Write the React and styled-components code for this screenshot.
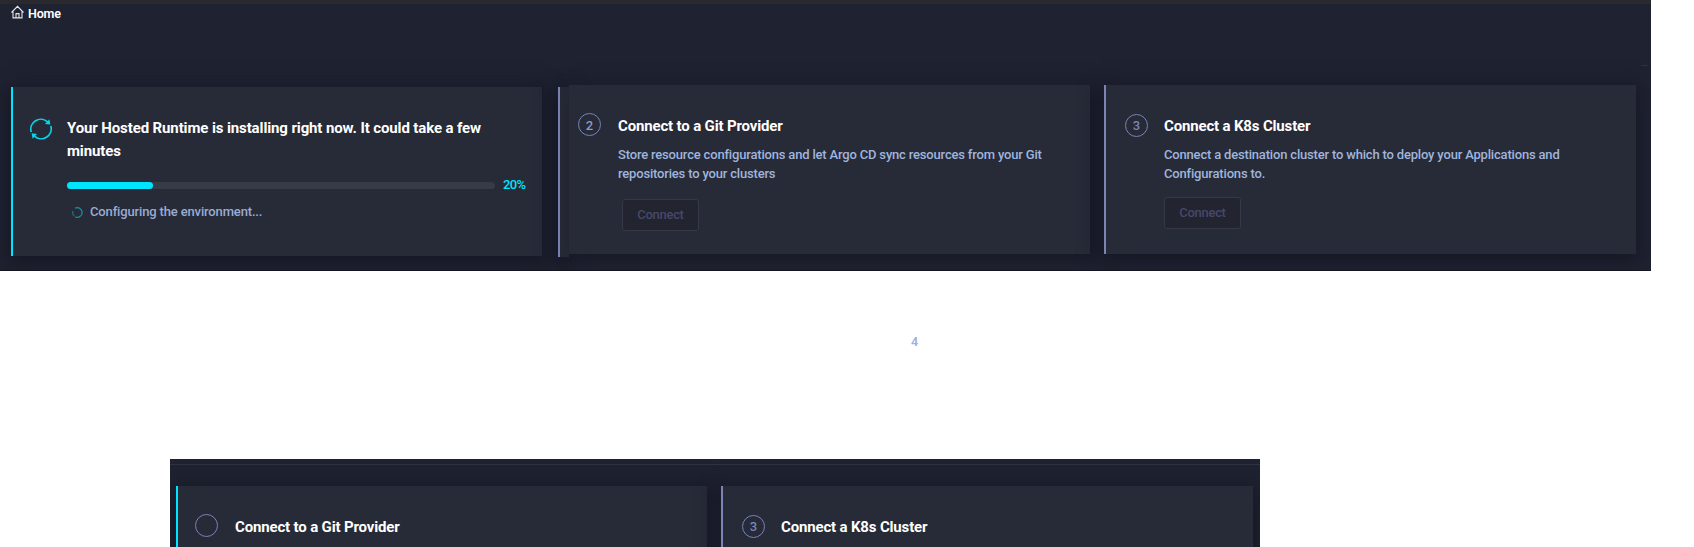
import React from "react";
import styled, { createGlobalStyle } from "styled-components";

const colors = {
  panel: "#1f2230",
  card: "#272a37",
  cyan: "#00e5ff",
  violet: "#7d83b5",
  copy: "#9fb5de",
};

const GlobalStyle = createGlobalStyle`
  *, *::before, *::after { box-sizing: border-box; }
  body {
    margin: 0;
    background: #fff;
    font-family: Roboto, "Liberation Sans", sans-serif;
    overflow: hidden;
  }
  h2, p { margin: 0; }
`;

const Page = styled.main`
  display: flex;
  flex-direction: column;
  align-items: flex-start;
  height: 547px;
  overflow: hidden;
`;

const HomePanel = styled.section`
  width: 1651px;
  height: 271px;
  flex: none;
  overflow: hidden;
  display: flex;
  flex-direction: column;
  background: ${colors.panel};
  border-top: 4px solid #2a2a2e;
  border-bottom: 1px solid #14151f;
`;

const Breadcrumb = styled.header`
  display: flex;
  align-items: center;
  gap: 4px;
  height: 19px;
  padding-left: 11px;
  color: #fff;
  font-size: 12.5px;
  font-weight: 600;
  letter-spacing: -0.2px;
`;

const HomeSvg = styled.svg`
  width: 13px;
  height: 14px;
  margin-top: -3px;
`;

const Divider = styled.div`
  width: 7px;
  height: 1px;
  margin: 42px 3px 0 auto;
  background: #30323f;
`;

const Steps = styled.div`
  display: flex;
  align-items: flex-start;
  padding: 19px 15px 0 11px;
`;

const shadow = "0 4px 18px 3px rgba(20, 21, 35, 0.8)";

const Card = styled.article`
  display: flex;
  align-items: flex-start;
  flex: none;
  gap: ${(p) => p.$gap || 16}px;
  width: ${(p) => p.$width}px;
  height: 169px;
  margin: ${(p) => p.$drop || 0}px 0 0 ${(p) => p.$before || 0}px;
  padding: 29px 16px 0 ${(p) => p.$inset}px;
  background: ${colors.card};
  border-left: ${(p) => (p.$accent ? `2px solid ${p.$accent}` : "0")};
  box-shadow: ${shadow};
`;

const CardEdge = styled.div`
  flex: none;
  width: 11px;
  height: 170px;
  margin: 2px 0 0 16px;
  background: ${colors.card};
  border-left: 2px solid ${colors.violet};
  box-shadow: ${shadow};
`;

const OpenCard = styled(Card)`
  box-shadow: 6px 4px 18px 0 rgba(20, 21, 35, 0.8);
`;

const CardBody = styled.div`
  flex: 1;
  min-width: 0;
  padding-top: 1px;
`;

const Title = styled.h2`
  color: #fff;
  font-size: 15px;
  font-weight: 700;
  line-height: 23px;
  letter-spacing: ${(p) => (p.$long ? -0.12 : -0.16)}px;
  white-space: nowrap;
`;

const Description = styled.p`
  margin-top: 7px;
  color: ${colors.copy};
  font-size: 13px;
  font-weight: 500;
  line-height: 19px;
  letter-spacing: -0.18px;
  white-space: nowrap;
`;

const StepNumber = styled.span`
  flex: none;
  display: flex;
  align-items: center;
  justify-content: center;
  width: 23px;
  height: 23px;
  margin-top: ${(p) => (p.$raised ? -1 : 0)}px;
  padding-top: ${(p) => (p.$raised ? 2 : 0)}px;
  border: 1px solid ${colors.violet};
  border-radius: 50%;
  color: ${(p) => (p.$raised ? "#8b9cc7" : colors.violet)};
  font-size: 13px;
  font-weight: 500;
  line-height: 15px;
`;

const ConnectButton = styled.button`
  display: block;
  width: 77px;
  height: 32px;
  margin: ${(p) => p.$top}px 0 0 ${(p) => p.$left || 0}px;
  padding: 0;
  background: #222430;
  border: 1px solid #363848;
  border-radius: 3px;
  color: #474869;
  font: 500 13px/30px Roboto, "Liberation Sans", sans-serif;
  letter-spacing: -0.3px;
`;

const Progress = styled.div`
  display: flex;
  align-items: center;
  gap: 8px;
  height: 15px;
  margin-top: 14px;
`;

const Track = styled.div`
  width: 428px;
  height: 7px;
  margin-top: 2px;
  border-radius: 4px;
  background: #373a47;
`;

const Fill = styled.div`
  height: 100%;
  border-radius: 4px;
  background: ${colors.cyan};
`;

const Percent = styled.span`
  color: ${colors.cyan};
  font-size: 13px;
  font-weight: 500;
  line-height: 15px;
  letter-spacing: -0.6px;
`;

const Status = styled.p`
  display: flex;
  align-items: center;
  gap: 7px;
  height: 19px;
  margin-top: 10px;
  padding-left: 5px;
  color: #98acd5;
  font-size: 13px;
  font-weight: 500;
  letter-spacing: -0.15px;
`;

const SyncSvg = styled.svg`
  flex: none;
  width: 22px;
  height: 22px;
  margin-top: 2px;
`;

const SpinnerSvg = styled.svg`
  width: 11px;
  height: 11px;
  margin-top: 1px;
`;

const StepFour = styled.div`
  flex: none;
  height: 188px;
  padding: 63px 0 0 911px;
  color: #9db1df;
  font-size: 12.5px;
  font-weight: 600;
  line-height: 15px;
`;

const PreviewPanel = styled.section`
  flex: none;
  width: 1090px;
  height: 88px;
  margin-left: 170px;
  padding-top: 5px;
  overflow: hidden;
  background: ${colors.panel};
`;

const PreviewSteps = styled.div`
  display: flex;
  align-items: flex-start;
  padding: 21px 7px 0 6px;
  border-top: 1px solid #30333f;
`;

function HomeIcon() {
  return (
    <HomeSvg viewBox="0 0 13 14" fill="none" stroke="#e4e5ea" strokeWidth="1.1">
      <path d="M.5 7.5 6.5 1.4l6 6.1M2 6.3v6.6h9V6.3M5 12.9V8.6h3v4.3" />
    </HomeSvg>
  );
}

function SyncIcon() {
  return (
    <SyncSvg viewBox="0 0 22 22" fill="none" stroke="#0cd3ea" strokeWidth="1.7">
      <path d="M1.2 14A10 10 0 0 1 17.6 3.9M20.8 8A10 10 0 0 1 4.4 18.1" />
      <path fill="#0cd3ea" stroke="none" d="M19.4 1.2 20.4 6.6 15 6zM2.6 20.8 1.6 15.2 7 16z" />
    </SyncSvg>
  );
}

function Spinner() {
  return (
    <SpinnerSvg viewBox="0 0 11 11" fill="none" strokeWidth="1.3">
      <path stroke="#148f9c" d="M3 1.3a4.8 4.8 0 1 1 0 8.4" />
      <path stroke="#17707c" d="M2.2 9A4.8 4.8 0 0 1 .9 4" />
    </SpinnerSvg>
  );
}

export default function App() {
  const progress = 20;
  return (
    <Page>
      <GlobalStyle />
      <HomePanel>
        <Breadcrumb>
          <HomeIcon />
          <span>Home</span>
        </Breadcrumb>
        <Divider />
        <Steps>
          <Card $width={531} $inset={17} $gap={15} $drop={2} $accent={colors.cyan}>
            <SyncIcon />
            <CardBody>
              <Title $long>
                Your Hosted Runtime is installing right now. It could take a few
                <br />
                minutes
              </Title>
              <Progress>
                <Track>
                  <Fill style={{ width: `${progress}%` }} />
                </Track>
                <Percent>{progress}%</Percent>
              </Progress>
              <Status>
                <Spinner />
                Configuring the environment...
              </Status>
            </CardBody>
          </Card>
          <CardEdge />
          <OpenCard $width={521} $inset={9} $gap={17}>
            <StepNumber $raised>2</StepNumber>
            <CardBody>
              <Title>Connect to a Git Provider</Title>
              <Description>
                Store resource configurations and let Argo CD sync resources from your Git
                <br />
                repositories to your clusters
              </Description>
              <ConnectButton $top={16} $left={4}>Connect</ConnectButton>
            </CardBody>
          </OpenCard>
          <Card $width={532} $inset={19} $before={14} $accent={colors.violet}>
            <StepNumber>3</StepNumber>
            <CardBody>
              <Title>Connect a K8s Cluster</Title>
              <Description>
                Connect a destination cluster to which to deploy your Applications and
                <br />
                Configurations to.
              </Description>
              <ConnectButton $top={14}>Connect</ConnectButton>
            </CardBody>
          </Card>
        </Steps>
      </HomePanel>
      <StepFour>4</StepFour>
      <PreviewPanel>
        <PreviewSteps>
          <Card $width={531} $inset={17} $gap={17} $accent={colors.cyan}>
            <StepNumber $raised />
            <CardBody>
              <Title>Connect to a Git Provider</Title>
            </CardBody>
          </Card>
          <Card $width={532} $inset={19} $before={14} $accent={colors.violet}>
            <StepNumber>3</StepNumber>
            <CardBody>
              <Title>Connect a K8s Cluster</Title>
            </CardBody>
          </Card>
        </PreviewSteps>
      </PreviewPanel>
    </Page>
  );
}
